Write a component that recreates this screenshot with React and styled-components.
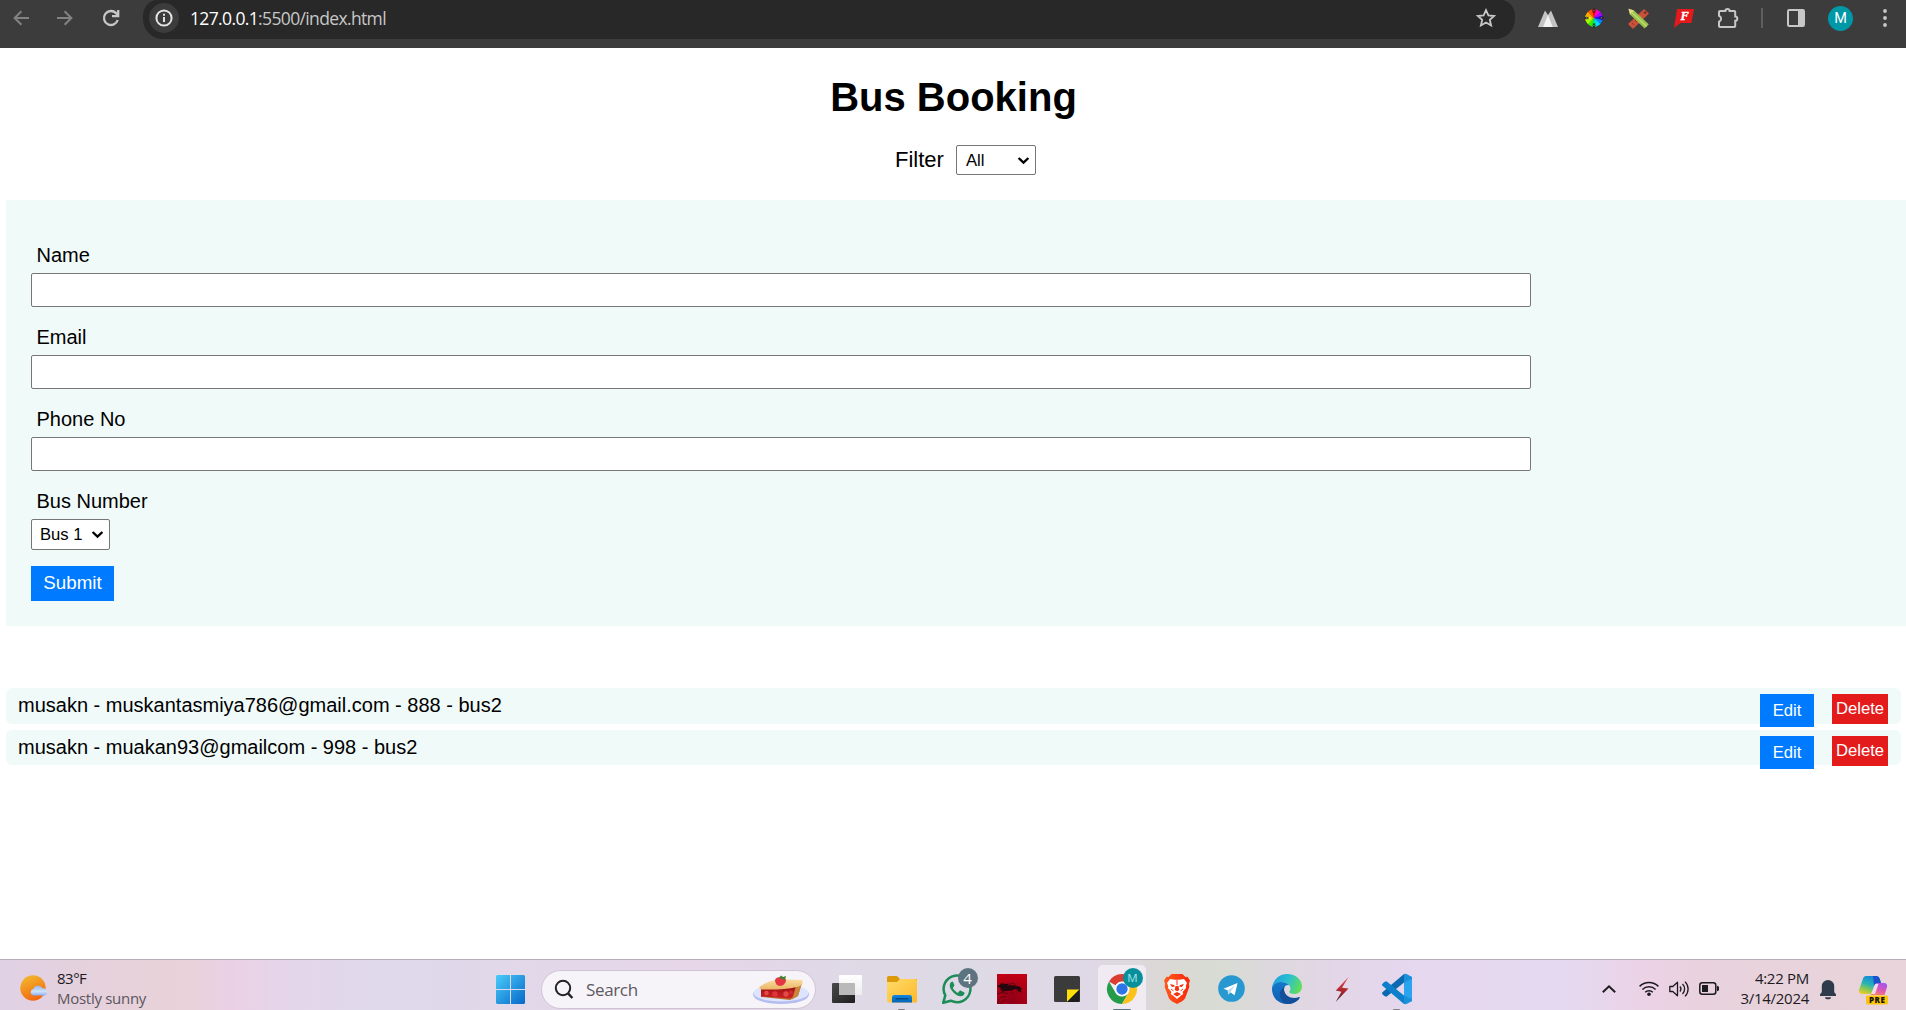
import React from "react";
import styled, { createGlobalStyle } from "styled-components";

const Global = createGlobalStyle`
  *, *::before, *::after { box-sizing: border-box; }
  body { margin: 0; background: #fff; overflow: hidden; }
  svg { display: block; flex: none; overflow: visible; }
`;

const arial = `"Liberation Sans", Arial, sans-serif`;
const system = `"Open Sans", "Noto Sans", sans-serif`;

const Screen = styled.div`
  display: flex;
  flex-direction: column;
  width: 1906px;
  height: 1010px;
  overflow: hidden;
  font-family: ${arial};
  color: #000;
`;

/* ---------- browser toolbar ---------- */
const Toolbar = styled.header`
  display: flex;
  flex: none;
  height: 48px;
  background: #3c3c3c;
`;
const Tool = styled.div`
  display: flex;
  flex: none;
  align-items: center;
  justify-content: center;
  width: ${(p) => p.$w}px;
  height: 36px;
`;
const AddressBar = styled.div`
  display: flex;
  flex: none;
  align-items: center;
  width: 1372px;
  height: 39px;
  padding: 0 19px 3px 6px;
  background: #282828;
  border-radius: 14px 14px 20px 20px / 16px 16px 20px 20px;
`;
const InfoChip = styled.div`
  display: grid;
  place-items: center;
  width: 30px;
  height: 30px;
  border-radius: 50%;
  background: #3c3c3c;
`;
const Url = styled.div`
  flex: 1;
  margin-left: 11px;
  font: 17.5px/24px ${system};
  letter-spacing: -0.64px;
  color: #c7c7c7;
  white-space: nowrap;
`;
const Host = styled.span`
  color: #fff;
`;
const Divider = styled.i`
  width: 2px;
  height: 20px;
  background: #5e5e5e;
`;
const Avatar = styled.div`
  display: grid;
  place-items: center;
  width: 25px;
  height: 25px;
  border-radius: 50%;
  background: #0097a7;
  color: #fff;
  font: 14.5px/25px Roboto, ${arial};
`;

/* ---------- page ---------- */
const Page = styled.main`
  flex: 1;
  min-height: 0;
  padding-left: 6px;
`;
const Title = styled.h1`
  margin: 0;
  padding: 26px 5px 0 0;
  font-size: 40px;
  line-height: 46px;
  text-align: center;
`;
const FilterBar = styled.div`
  display: flex;
  justify-content: center;
  align-items: center;
  height: 30px;
  margin: 25px 0 25px 19px;
`;
const FilterLabel = styled.label`
  margin-right: 12px;
  font-size: 22px;
  line-height: 26px;
`;
const SelectWrap = styled.div`
  display: grid;
  align-items: center;
  width: ${(p) => p.$w}px;
  height: ${(p) => p.$h}px;
  & > * { grid-area: 1 / 1; }
  & > svg { justify-self: end; margin-right: 7px; pointer-events: none; }
`;
const NativeSelect = styled.select`
  appearance: none;
  width: 100%;
  height: 100%;
  margin: 0;
  padding: 0 0 0 ${(p) => p.$pad}px;
  border: 1px solid #767676;
  border-radius: 2px;
  background: #fff;
  color: #000;
  font: 16.67px/19px ${arial};
`;
const Form = styled.form`
  display: flex;
  flex-direction: column;
  align-items: flex-start;
  height: 426px;
  padding: 43px 25px 0;
  background: #f0faf9;
`;
const Label = styled.label`
  height: 30px;
  padding-left: 5.5px;
  font-size: 20px;
  line-height: 24px;
`;
const TextInput = styled.input`
  width: 1500px;
  height: 34px;
  margin: 0 0 18px;
  border: 1px solid #767676;
  border-radius: 2px;
  background: #fff;
`;
const Button = styled.button`
  flex: none;
  width: ${(p) => p.$w}px;
  height: ${(p) => p.$h}px;
  padding: 0 0 ${(p) => p.$lift || 0}px;
  border: 0;
  background: ${(p) => (p.$danger ? "#e41b1b" : "#007bff")};
  color: #fff;
  font: ${(p) => p.$size || 16.67}px/20px ${arial};
`;
const SubmitButton = styled(Button)`
  margin-top: 16px;
`;
const List = styled.ul`
  display: flex;
  flex-direction: column;
  gap: 6px;
  margin: 62px 5px 0 0;
  padding: 0;
  list-style: none;
`;
const Booking = styled.li`
  display: flex;
  align-items: flex-start;
  height: ${(p) => p.$h}px;
  padding: 6px 13px 0 12px;
  border-radius: 6px;
  background: #f0faf9;
  font-size: 20px;
  line-height: 23px;
`;
const BookingText = styled.span`
  flex: 1;
`;
const Actions = styled.div`
  display: flex;
  gap: 18px;
`;

/* ---------- taskbar ---------- */
const Taskbar = styled.footer`
  display: flex;
  flex: none;
  align-items: flex-start;
  height: 51px;
  border-top: 1px solid #b7adb8;
  color: #1c1a1e;
  font-family: ${system};
  background: linear-gradient(90deg,
    #e0d1e5 0, #e5d1dc 90px, #e9d2d9 185px, #ebd0e5 232px, #e4d6ea 290px, #dfd9eb 390px,
    #e1d8e9 500px, #e6d6e8 690px, #e1d8e7 800px, #dddae5 950px, #e0d8e6 1095px,
    #dad8d4 1170px, #d8dcd4 1225px, #ddd8dd 1270px, #e3d6e8 1340px, #e5d8ef 1420px,
    #e4d9f0 1570px, #ecd2e5 1652px, #e8d2dd 1710px, #e8d4da 1906px);
`;
const Weather = styled.div`
  display: flex;
  width: 483px;
  padding: 8px 0 0 20px;
  gap: 9px;
  & > svg { margin-top: 7px; }
`;
const Lines = styled.div`
  display: flex;
  flex-direction: column;
  font-size: 15px;
  line-height: 20px;
  letter-spacing: ${(p) => p.$track}px;
  text-align: ${(p) => p.$align || "left"};
  white-space: nowrap;
`;
const Muted = styled.span`
  color: #5b555d;
  letter-spacing: -0.28px;
`;
const Slot = styled.div`
  display: flex;
  flex: none;
  justify-content: center;
  width: ${(p) => p.$w || 55}px;
  height: 50px;
  padding-top: ${(p) => p.$top || 0}px;
`;
const AppTile = styled.div`
  position: relative;
  display: flex;
  justify-content: center;
  width: 48px;
  height: 50px;
  padding-top: ${(p) => p.$top || 14}px;
  ${(p) => p.$active && `
    height: 45px;
    margin-top: 5px;
    padding-top: 9px;
    border-radius: 5px 5px 0 0;
    background: #f0ebf3;
  `}
`;
const Running = styled.i`
  position: absolute;
  bottom: 0;
  left: calc(50% - ${(p) => p.$w / 2}px);
  width: ${(p) => p.$w}px;
  height: ${(p) => p.$h || 1}px;
  border-radius: 2px 2px 0 0;
  background: ${(p) => p.$c || "#858087"};
`;
const Badge = styled.span`
  position: absolute;
  top: ${(p) => p.$top}px;
  right: 3px;
  width: 20px;
  height: 20px;
  border-radius: 50%;
  background: ${(p) => p.$c};
  color: ${(p) => p.$ink || "#fff"};
  font: ${(p) => p.$size}px/20px ${system};
  text-align: center;
`;
const SearchPill = styled.div`
  display: flex;
  flex: none;
  align-items: center;
  width: 275px;
  height: 39px;
  margin: 10px 3px 0;
  padding: 0 6px 0 13px;
  border: 1px solid #cfc4d4;
  border-radius: 20px;
  background: #f6f3f9;
  color: #5d5961;
  font-size: 17px;
  line-height: 24px;
`;
const SearchText = styled.span`
  flex: 1;
  margin-left: 13px;
  letter-spacing: -0.35px;
`;
const Tray = styled.div`
  display: flex;
  align-items: flex-start;
  margin-left: auto;
`;
const Clock = styled.div`
  display: flex;
  justify-content: flex-end;
  width: 85px;
  padding-top: 8px;
`;

const Ic = ({ w = 24, h, box, children, ...rest }) => (
  <svg width={w} height={h || w} viewBox={box || `0 0 ${w} ${h || w}`} fill="none" {...rest}>
    {children}
  </svg>
);

const Chevron = () => (
  <Ic w={11} h={7} stroke="#000" strokeWidth="2.4">
    <path d="M.6 1l4.900 4.600L10.400 1" />
  </Ic>
);

const Arrow = ({ flip }) => (
  <Ic w={16} stroke="#828282" strokeWidth="2" transform={flip ? "scale(-1 1)" : undefined}>
    <path d="M16 8H1.8M8.4 1.2L1.6 8l6.8 6.8" />
  </Ic>
);

const Reload = () => (
  <Ic w={18} stroke="#c7c7c7" strokeWidth="2.3">
    <path d="M15.7 11A7 7 0 1 1 14 4.1l2 2" />
    <path d="M16.2 1v6.2H10" />
  </Ic>
);

const Info = () => (
  <Ic w={18} stroke="#e3e3e3" strokeWidth="2">
    <circle cx="9" cy="9" r="7.6" />
    <path d="M9 8v5M9 4.8v2" />
  </Ic>
);

const Star = () => (
  <Ic w={20} stroke="#c7c7c7" strokeWidth="1.8">
    <path d="M10 2.2l2.4 5.2 5.7.6-4.3 3.8 1.3 5.7-5.1-3-5.1 3 1.3-5.7L1.9 8l5.7-.6z" />
  </Ic>
);

const Peaks = () => (
  <Ic w={20} h={17}>
    <path d="M0 17L7 .5 10 5l3-4.5L20 17z" fill="#c4c4c4" />
    <path d="M10 5l4.7 12H5z" fill="#f3f3f3" />
  </Ic>
);

const wheel = ["#f00", "#f0c", "#a0f", "#30f", "#08f", "#0df", "#0e7", "#3e0", "#9f0", "#fe0", "#fa0", "#f50"];
const ColorWheel = () => (
  <Ic w={20} box="-10 -10 20 20">
    {wheel.map((c, i) => (
      <path key={c} d="M0 0L-2.400-8.400A8.700 8.700 0 0 1 2.400-8.400z" fill={c} transform={`rotate(${i * 30})`} />
    ))}
    {[0, 90, 180, 270].map((a) => (
      <path key={a} d="M0-9.600L1-7.200 0-5.400-1-7.200z" fill="#aaa" stroke="#111" strokeWidth=".8" transform={`rotate(${a})`} />
    ))}
  </Ic>
);

const Pencils = () => (
  <Ic w={21} box="0 0 21 21">
    <path d="M16 1l5 4.5L5 21 0 16z" fill="#c9503a" />
    <path d="M15.5 4l2 2M4 15l2 2M7 12l2 2" stroke="#8e3323" />
    <circle cx="17.3" cy="4.4" r="1" fill="#53261e" />
    <path d="M.5.8L6 2.6 20.8 16.2l-4.2 4.4L2 6.5z" fill="#9ac249" />
    <path d="M.5.8L6 2.6 2 6.5z" fill="#e7d58a" />
    <path d="M4 4.5l14.700 14" stroke="#bfdb75" strokeWidth="1.400" />
  </Ic>
);

const FFlag = () => (
  <Ic w={20} h={19}>
    <path d="M3 0h17l-2.6 14H6.5L0 19z" fill="#e5191c" />
    <text x="6.500" y="11" fill="#fff" stroke="#fff" strokeWidth=".4" fontFamily="Liberation Serif, serif" fontSize="12.500" fontWeight="700" fontStyle="italic">F</text>
  </Ic>
);

const Puzzle = () => (
  <Ic w={21} h={20} stroke="#c7c7c7" strokeWidth="2">
    <path d="M2 3h5.400a2.100 2.100 0 0 1 4.200 0h4.600a1 1 0 0 1 1 1v4.600a2.100 2.100 0 0 1 0 4.200V18a1 1 0 0 1-1 1H2a1 1 0 0 1-1-1v-4.200a3.200 3.200 0 0 0 0-6V4a1 1 0 0 1 1-1z" />
  </Ic>
);

const SidePanel = () => (
  <Ic w={18}>
    <rect x="1" y="1" width="16" height="16" rx="1.200" stroke="#c7c7c7" strokeWidth="2" />
    <path d="M11 1h6v16h-6z" fill="#c7c7c7" />
  </Ic>
);

const Dots = () => (
  <Ic w={4} h={18} fill="#c7c7c7">
    <circle cx="2" cy="2" r="1.900" />
    <circle cx="2" cy="9" r="1.900" />
    <circle cx="2" cy="16" r="1.900" />
  </Ic>
);

const SunCloud = () => (
  <Ic w={28} h={27}>
    <defs>
      <linearGradient id="sun" x1=".2" y1="0" x2=".6" y2="1"><stop stopColor="#f2b92f" /><stop offset="1" stopColor="#f2660f" /></linearGradient>
      <linearGradient id="cloud" x1="0" y1="0" x2="0" y2="1"><stop stopColor="#8fb9f4" /><stop offset=".6" stopColor="#cfe2fc" /><stop offset="1" stopColor="#8aaeee" /></linearGradient>
    </defs>
    <circle cx="13" cy="13" r="12.700" fill="url(#sun)" />
    <path d="M13 20.500a3.300 3.300 0 0 1 .4-6.400 5 5 0 0 1 9.200-.7 3.700 3.700 0 0 1 2 7.100z" fill="url(#cloud)" />
  </Ic>
);

const Windows = () => (
  <Ic w={29}>
    <defs>
      <linearGradient id="win" gradientUnits="userSpaceOnUse" x1="0" y1="0" x2="29" y2="29"><stop stopColor="#4bcbfa" /><stop offset="1" stopColor="#0568c9" /></linearGradient>
    </defs>
    <path d="M1 0h13v14H0V1zM15 0h13l1 1v13H15zM0 15h14v14H1l-1-1zM15 15h14v13l-1 1H15z" fill="url(#win)" />
  </Ic>
);

const Magnifier = () => (
  <Ic w={18} h={19} stroke="#222" strokeWidth="2">
    <circle cx="8" cy="8" r="7.200" />
    <path d="M12.800 13.200l4.600 4.800" strokeWidth="2.400" />
  </Ic>
);

const Pie = () => (
  <Ic w={56} h={28}>
    <defs>
      <linearGradient id="crust" x1="0" y1="0" x2="0" y2="1"><stop stopColor="#fbe0a4" /><stop offset="1" stopColor="#eab565" /></linearGradient>
      <linearGradient id="fill" x1="0" y1="0" x2="0" y2="1"><stop stopColor="#9e1216" /><stop offset="1" stopColor="#cf2327" /></linearGradient>
    </defs>
    <ellipse cx="28" cy="18.500" rx="28" ry="9.500" fill="#b3bdf0" />
    <ellipse cx="28" cy="17" rx="27.500" ry="8.500" fill="#dde4fd" />
    <path d="M8 12l34-1 7-4-4 13-8 4-29-3z" fill="#b8742b" />
    <path d="M8 12l35-1 1 8-7 3.500L8 20.500z" fill="url(#fill)" />
    <path d="M43 10l6-4-4 14-6 3.500z" fill="#c98638" />
    <path d="M7 10.500C12 7 19 4 27 3l22 1c2 3-1 6-5 7-11 3-24 2.500-35 2.500-3 0-3-2-2-3z" fill="url(#crust)" />
    <circle cx="13.500" cy="17" r="2.300" fill="#e44b48" /><circle cx="22" cy="18" r="2.800" fill="#df3438" />
    <circle cx="33" cy="18" r="2.700" fill="#e34a45" /><circle cx="38" cy="16.500" r="2" fill="#d42b30" />
    <path d="M22 4c1-4 10-4 11 0 0 3-3 6-6 6s-5-3-5-6z" fill="#e63645" />
    <path d="M26 2l2-2.500 2 1.500 3-1-1 4-3-1z" fill="#43802e" />
  </Ic>
);

const TaskView = () => (
  <Ic w={30} h={28}>
    <defs>
      <linearGradient id="tvd" x1="0" y1="0" x2="1" y2="1"><stop stopColor="#494949" /><stop offset="1" stopColor="#1d1d1d" /></linearGradient>
      <linearGradient id="tvl" x1="0" y1="0" x2="0" y2="1"><stop stopColor="#fff" /><stop offset="1" stopColor="#ececec" /></linearGradient>
    </defs>
    <rect y="8" width="23" height="20" rx="1" fill="url(#tvd)" />
    <rect x="7" width="23" height="20" rx="1" fill="url(#tvl)" />
    <path d="M7 8h15a1 1 0 0 1 1 1v11H8a1 1 0 0 1-1-1z" fill="#b9b9b9" />
  </Ic>
);

const Explorer = () => (
  <Ic w={30} h={27}>
    <defs>
      <linearGradient id="fold" x1="0" y1="0" x2="1" y2="1"><stop stopColor="#ffdb6a" /><stop offset="1" stopColor="#fdb92a" /></linearGradient>
      <linearGradient id="fblue" x1="0" y1="0" x2="0" y2="1"><stop stopColor="#1286e0" /><stop offset="1" stopColor="#0763b5" /></linearGradient>
    </defs>
    <path d="M0 1.500A1.500 1.500 0 0 1 1.500 0H10l3 3h17v9H0z" fill="#dc9a08" />
    <path d="M0 6h10l3-3h15.500A1.500 1.500 0 0 1 30 4.500V25a1.500 1.500 0 0 1-1.500 1.500h-27A1.500 1.500 0 0 1 0 25z" fill="url(#fold)" />
    <path d="M5 26.500V21.500a2.500 2.500 0 0 1 2.500-2.500h15a2.500 2.500 0 0 1 2.500 2.500v5z" fill="url(#fblue)" />
    <path d="M8.500 22.800h13" stroke="#063f79" strokeWidth="1.200" />
  </Ic>
);

const WhatsApp = () => (
  <Ic w={30}>
    <path d="M1.200 28.800l2.100-7.500A13.400 13.400 0 1 1 8.800 26.700z" stroke="#1c8d58" strokeWidth="2.500" strokeLinejoin="round" />
    <path d="M10.400 7.600c-.8 0-2.700 1.200-2.700 3.900 0 4.500 6.400 10.700 10.900 10.700 2.700 0 4-1.800 4-3.200 0-.5-4-2.500-4.500-2.400-.7.100-1.500 2.100-2.200 2.100-1 0-5-3.700-5-4.800 0-.7 1.500-1.500 1.500-2.300 0-.6-1.300-4-2-4z" fill="#1c8d58" />
  </Ic>
);

const Dragon = () => (
  <Ic w={30}>
    <defs><radialGradient id="drg" cx=".5" cy=".9" r=".9"><stop stopColor="#8e0017" /><stop offset="1" stopColor="#c10014" /></radialGradient></defs>
    <path d="M0 0h30v30H0z" fill="url(#drg)" />
    <path d="M0 12l4-2-1-1c3 0 4 1 6 1l3-.5-1.500 2c4-.5 7 0 9 .5l3 .5 2 2-.5 2 .5 2.500-2.500-2-1.500 1.500.5-2.500-3-1-3 1.500c-3 .8-6 0-8.500 1L4 19l2-3-3 .5 1-2z" fill="#25070e" />
    <path d="M12 10.500l4-1.500 3 2.500M0 20c4-2 8-1 11-.5M1 30c0-5 3-8 8-7.500M4 30c1-3 2-4 5-4.500M14 18l3 2.500" stroke="#3b0712" strokeWidth=".7" />
  </Ic>
);

const StickyNotes = () => (
  <Ic w={26}>
    <rect width="26" height="26" rx="1.500" fill="#3b3b3b" />
    <path d="M13 13.500h12.500L13 26z" fill="#ffde0a" />
    <path d="M25.500 13.500L13 26h12.500z" fill="#1d1d1d" />
  </Ic>
);

const Chrome = () => (
  <Ic w={30} box="-15 -15 30 30">
    <path d="M-13-7.500A15 15 0 0 1 13-7.500H0A7.500 7.500 0 0 0-6.500-3.700z" fill="#dc3d32" />
    <path d="M-13-7.500A15 15 0 0 0 0 15l6.500-11.200A7.500 7.500 0 0 1-6.500 3.800z" fill="#249b49" />
    <path d="M13-7.500A15 15 0 0 1 0 15L6.500 3.800A7.500 7.500 0 0 0 0-7.500z" fill="#fcc21b" />
    <circle r="7.200" fill="#fff" /><circle r="5.700" fill="#2e75e8" />
  </Ic>
);

const Brave = () => (
  <Ic w={26} h={30}>
    <defs><linearGradient id="brv"><stop stopColor="#ff5a1f" /><stop offset="1" stopColor="#f8280a" /></linearGradient></defs>
    <path d="M7.500 0h11l3 3 2-.3L26 6.500l-1 3L25.300 13 21 24.500c-2 2.500-5 4-8 5.500-3-1.500-6-3-8-5.500L.7 13 1 9.500 0 6.500l2.500-3.800 2 .3z" fill="url(#brv)" />
    <path d="M6 5l5 .8h4L20 5l3 4-1.200 3 .2 2-3.500 4 .8 2-2.300 1.500-4 3.500-4-3.500L6.700 20l.8-2L4 14l.2-2L3 9z" fill="#fff" />
    <path d="M6 10l4 1 .8 1.500-2.800.5zM20 10l-4 1-.8 1.500 2.800.5zM11.500 12h3l.8 4-2.300 1.300-2.300-1.300zM9 20l4-2 4 2-4 2.600z" fill="#ef3515" />
    <path d="M7 15l2.500 2M19 15l-2.500 2M13 6v5" stroke="#ef3515" strokeWidth="1" />
  </Ic>
);

const Telegram = () => (
  <Ic w={27}>
    <circle cx="13.500" cy="13.500" r="13.300" fill="#2798d0" />
    <path d="M5.500 13.700L19.500 8l-.4 2-2.500 10.200-4.300-3-2 2.300-.7-4.200z" fill="#fff" />
    <path d="M9.800 15.200l7.200-4.700-4.700 6.700-2 2.300z" fill="#bfdeed" />
  </Ic>
);

const Edge = () => (
  <Ic w={30}>
    <defs>
      <linearGradient id="e1" x1="0" y1=".3" x2="1" y2=".6"><stop stopColor="#1e9fe0" /><stop offset=".5" stopColor="#2cc0cf" /><stop offset="1" stopColor="#63e052" /></linearGradient>
      <linearGradient id="e2" x1="0" y1="0" x2="0" y2="1"><stop stopColor="#1479cb" /><stop offset="1" stopColor="#115db0" /></linearGradient>
    </defs>
    <path d="M0 14C1 6 7 0 15 0c9 0 15 6 15 12.500 0 5-4 7.500-7.500 7.500-3.500 0-5.500-1.300-5.300-2.200 1-1 1.300-2 1.300-3.200C18.500 11 14 8 9 8c-4 0-7 2-9 6z" fill="url(#e1)" />
    <path d="M0 14c1.500-4 5-6 9-6 3 0 6 1 8 3-3-.6-5 1.500-5 4.500 0 6 5 10 11 10 2 0 3-.4 4.500-1C25 28 20 30 15 30 6 30-.5 23 0 14z" fill="url(#e2)" />
    <path d="M12.300 13C9 15 7 18 8 22c1 4.500 4 7.500 8 8 5 0 9-2.300 11.700-6.200.3-.7-.3-1-.8-.7-6 3-14.600-1-14.900-7.500 0-1 0-2 .3-2.600z" fill="#124f9b" />
  </Ic>
);

const Bolt = () => (
  <Ic w={14} h={25}>
    <defs><linearGradient id="blt" x1="0" y1="0" x2="0" y2="1"><stop stopColor="#f5484d" /><stop offset=".6" stopColor="#a3242d" /><stop offset="1" stopColor="#3a3036" /></linearGradient></defs>
    <path d="M13.500 0L7 10.800l6.500.6L.7 25l5.700-10.200L.8 13.500z" fill="url(#blt)" />
  </Ic>
);

const VSCode = () => (
  <Ic w={30}>
    <path d="M22 0l8 3v24l-8 3z" fill="#2aa4ee" />
    <path d="M22 0v8.500L4.500 22.700 2.300 22 0 19.700l.2-1.200z" fill="#0b69b2" />
    <path d="M22 30v-8.500L4.500 7.300 2.300 8 0 10.300l.2 1.200z" fill="#0d7fcb" />
    <path d="M22 0l2-.2L30 3v2l-8 3.500zM22 30l2 .2 6-3.200v-2l-8-3.500z" fill="#1b91dc" />
  </Ic>
);

const Caret = () => (
  <Ic w={14} h={8} stroke="#1c1a1e" strokeWidth="1.900"><path d="M.8 7.200L7 1.200l6.200 6" /></Ic>
);

const Wifi = () => (
  <Ic w={20} h={15} stroke="#1c1a1e" strokeWidth="1.500">
    <path d="M.6 5.400a13.400 13.400 0 0 1 18.800 0M3.400 8.500a9.400 9.400 0 0 1 13.200 0M6.200 11.300a5.400 5.400 0 0 1 7.600 0" />
    <circle cx="10" cy="13.300" r="1.800" fill="#1c1a1e" stroke="none" />
  </Ic>
);

const Speaker = () => (
  <Ic w={20} h={16} stroke="#1c1a1e" strokeWidth="1.300">
    <path d="M.8 5.500h3L8.500 1.200v13.600L3.800 10.500h-3z" strokeLinejoin="round" />
    <path d="M11 5.500a4 4 0 0 1 0 5M13.500 3a7 7 0 0 1 0 10M16 .6a10.400 10.400 0 0 1 0 14.800" />
  </Ic>
);

const Battery = () => (
  <Ic w={20} h={13}>
    <rect x=".8" y=".8" width="16" height="11.400" rx="2.500" stroke="#1c1a1e" strokeWidth="1.500" />
    <rect x="3" y="3" width="6" height="7" fill="#1c1a1e" />
    <path d="M18 3.800l2 1v3.400l-2 1z" fill="#1c1a1e" />
  </Ic>
);

const Bell = () => (
  <Ic w={16} h={20} fill="#2e3b4b">
    <path d="M8 0a6.200 6.200 0 0 1 6.200 6.200V12L16 14.500V16H0v-1.500L1.800 12V6.200A6.200 6.200 0 0 1 8 0zM5 17.300h6a3 2 0 0 1-6 0z" />
  </Ic>
);

const Copilot = () => (
  <Ic w={29} h={29}>
    <defs>
      <linearGradient id="c1" x1=".6" y1="0" x2=".2" y2="1"><stop stopColor="#1685df" /><stop offset=".45" stopColor="#27b3b5" /><stop offset=".75" stopColor="#8fca4c" /><stop offset="1" stopColor="#f1cb2d" /></linearGradient>
      <linearGradient id="c2" x1=".7" y1="0" x2=".2" y2="1"><stop stopColor="#a455ea" /><stop offset=".5" stopColor="#d957b9" /><stop offset="1" stopColor="#fb8a55" /></linearGradient>
    </defs>
    <path d="M7 0h10c2 0 3 1 3.800 3l1.200 4h-3c-2 0-3.500 1-4 3l-2.500 8H3c-2.500 0-3.500-2-3-4L4 2.500C4.500 1 5.500 0 7 0z" fill="url(#c1)" />
    <path d="M14 0h3c2 0 3 1 3.800 3l1.200 4h-3c-2 0-3.500 1-4 3z" fill="#1c51c8" />
    <path d="M19 7h6c2.500 0 3.500 2 3 4l-2.500 8H11l1.500-1c1-.5 1.500-1.500 2-3l2-6C17 7.700 18 7 19 7z" fill="url(#c2)" />
    <path d="M16.500 8h3L16 18h-4z" fill="#f4d9f2" />
    <rect x="7" y="19.500" width="22" height="9" rx="1.500" fill="#fbc50d" />
    <text x="18.200" y="27" textAnchor="middle" fill="#17130a" fontFamily="Open Sans, sans-serif" fontSize="8" fontWeight="800" letterSpacing=".5">PRE</text>
  </Ic>
);

const fields = ["Name", "Email", "Phone No"];
const bookings = [
  { text: "musakn - muskantasmiya786@gmail.com - 888 - bus2", h: 36 },
  { text: "musakn - muakan93@gmailcom - 998 - bus2", h: 35 },
];

export default function App() {
  return (
    <Screen>
      <Global />
      <Toolbar>
        <Tool $w={42}><Arrow /></Tool>
        <Tool $w={46}><Arrow flip /></Tool>
        <Tool $w={45}><Reload /></Tool>
        <Tool $w={10} />
        <AddressBar>
          <InfoChip><Info /></InfoChip>
          <Url><Host>127.0.0.1</Host>:5500/index.html</Url>
          <Star />
        </AddressBar>
        <Tool $w={10} />
        <Tool $w={46}><Peaks /></Tool>
        <Tool $w={45}><ColorWheel /></Tool>
        <Tool $w={45}><Pencils /></Tool>
        <Tool $w={45}><FFlag /></Tool>
        <Tool $w={45}><Puzzle /></Tool>
        <Tool $w={22}><Divider /></Tool>
        <Tool $w={45}><SidePanel /></Tool>
        <Tool $w={45}><Avatar>M</Avatar></Tool>
        <Tool $w={43}><Dots /></Tool>
      </Toolbar>

      <Page>
        <Title>Bus Booking</Title>
        <FilterBar>
          <FilterLabel htmlFor="filter">Filter</FilterLabel>
          <SelectWrap $w={80} $h={30}>
            <NativeSelect id="filter" $pad={9}><option>All</option></NativeSelect>
            <Chevron />
          </SelectWrap>
        </FilterBar>
        <Form>
          {fields.map((name) => (
            <React.Fragment key={name}>
              <Label htmlFor={name}>{name}</Label>
              <TextInput id={name} />
            </React.Fragment>
          ))}
          <Label htmlFor="bus">Bus Number</Label>
          <SelectWrap $w={79} $h={31}>
            <NativeSelect id="bus" $pad={8}><option>Bus 1</option></NativeSelect>
            <Chevron />
          </SelectWrap>
          <SubmitButton type="button" $w={83} $h={35} $size={18.75} $lift={2}>Submit</SubmitButton>
        </Form>
        <List>
          {bookings.map((b) => (
            <Booking key={b.text} $h={b.h}>
              <BookingText>{b.text}</BookingText>
              <Actions>
                <Button $w={54} $h={33}>Edit</Button>
                <Button $w={56} $h={30} $danger>Delete</Button>
              </Actions>
            </Booking>
          ))}
        </List>
      </Page>

      <Taskbar>
        <Weather>
          <SunCloud />
          <Lines $track={-0.5}><span>83°F</span><Muted>Mostly sunny</Muted></Lines>
        </Weather>
        <Slot $w={55}><AppTile $top={15}><Windows /></AppTile></Slot>
        <SearchPill>
          <Magnifier />
          <SearchText>Search</SearchText>
          <Pie />
        </SearchPill>
        <Slot><AppTile $top={15}><TaskView /></AppTile></Slot>
        <Slot><AppTile $top={16}><Explorer /><Running $w={7} /></AppTile></Slot>
        <Slot><AppTile><WhatsApp /><Badge $top={8} $c="#5d7480" $size={15}>4</Badge></AppTile></Slot>
        <Slot><AppTile><Dragon /></AppTile></Slot>
        <Slot><AppTile $top={16}><StickyNotes /></AppTile></Slot>
        <Slot>
          <AppTile $active>
            <Chrome />
            <Badge $top={3} $c="#07909c" $ink="#a9e4e9" $size={11.5}>M</Badge>
            <Running $w={18} $c="#5c7484" />
          </AppTile>
        </Slot>
        <Slot><AppTile><Brave /></AppTile></Slot>
        <Slot><AppTile $top={15}><Telegram /></AppTile></Slot>
        <Slot><AppTile><Edge /></AppTile></Slot>
        <Slot><AppTile $top={17}><Bolt /></AppTile></Slot>
        <Slot><AppTile><VSCode /><Running $w={7} /></AppTile></Slot>
        <Tray>
          <Slot $w={50} $top={25}><Caret /></Slot>
          <Slot $w={30} $top={21}><Wifi /></Slot>
          <Slot $w={30} $top={21}><Speaker /></Slot>
          <Slot $w={30} $top={22}><Battery /></Slot>
          <Clock>
            <Lines $align="right" $track={-0.28}><span>4:22 PM</span><span>3/14/2024</span></Lines>
          </Clock>
          <Slot $w={38} $top={20}><Bell /></Slot>
          <Slot $w={53} $top={16}><Copilot /></Slot>
          <Slot $w={6} />
        </Tray>
      </Taskbar>
    </Screen>
  );
}
